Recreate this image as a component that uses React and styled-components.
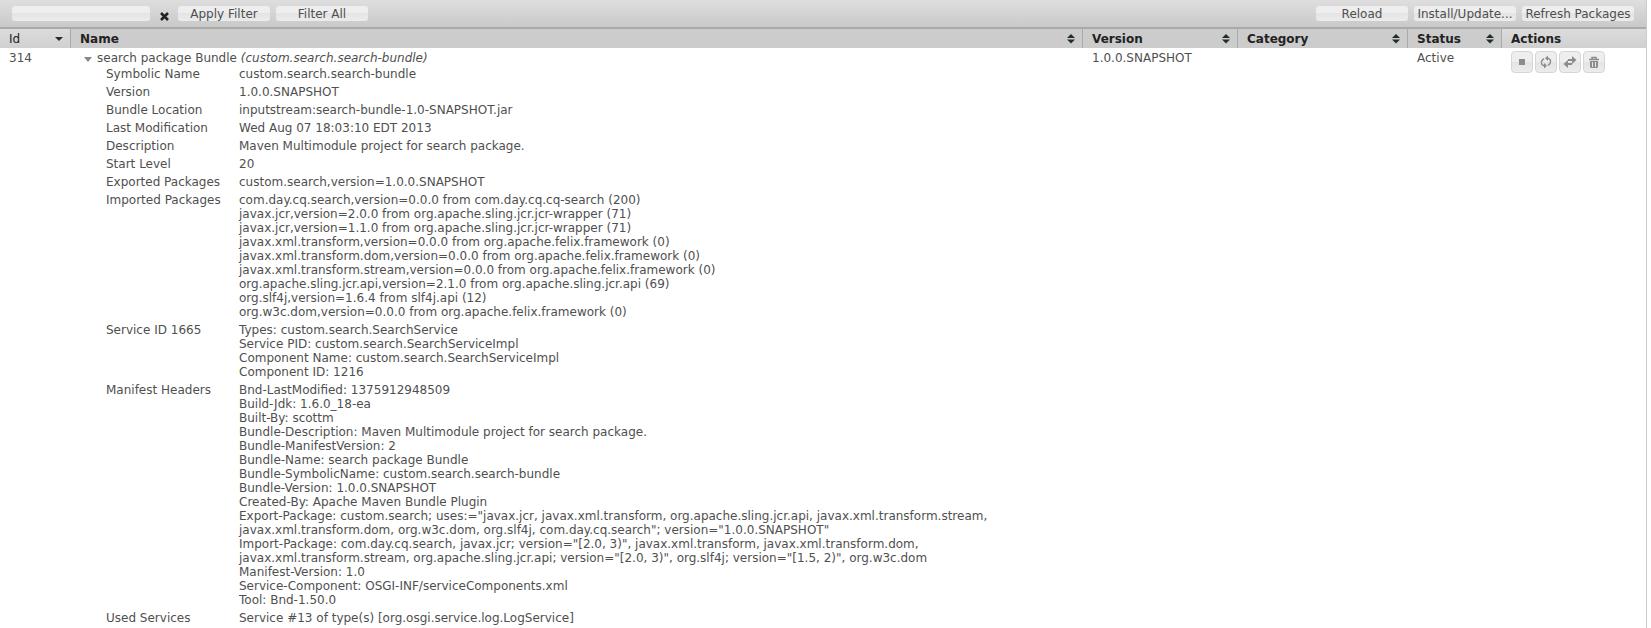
import React from 'react';
import styled, { createGlobalStyle, css } from 'styled-components';

const GlobalStyle = createGlobalStyle`
  body {
    margin: 0;
    background: #fff;
    color: #4f4f4f;
    font: 12px/14px "DejaVu Sans", Verdana, sans-serif;
  }

  button, input {
    font: inherit;
    color: inherit;
  }
`;

const Page = styled.main`
  min-height: 100vh;
  margin-right: 4px;
  box-sizing: border-box;
  border-right: 1px solid #ccc;
`;

const Toolbar = styled.form`
  display: flex;
  align-items: flex-start;
  gap: 6px;
  height: 27px;
  padding: 6px 12px 0;
  box-sizing: border-box;
  background: linear-gradient(#dedede, #c9c9c9);
`;

const glossy = css`
  border: 0;
  border-radius: 3px;
  background: linear-gradient(#eee 50%, #e4e4e4 50%, #ececec);
`;

const FilterInput = styled.input`
  ${glossy}
  width: 138px;
  height: 15px;
  padding: 0 4px;
  box-sizing: border-box;
`;

const ClearButton = styled.button`
  display: flex;
  width: 16px;
  padding: 6px 0 0 4px;
  border: 0;
  background: none;
`;

const Button = styled.button`
  ${glossy}
  width: ${({ $width }) => $width || '92px'};
  height: 15px;
  padding: 1px 0 0;
  line-height: 14px;
  white-space: nowrap;
`;

const Spacer = styled.div`
  flex: 1;
`;

const BundleTable = styled.table`
  width: 100%;
  table-layout: fixed;
  border-spacing: 0;
  border-top: 2px solid #aaa;
`;

const Th = styled.th`
  width: ${({ $width }) => $width || 'auto'};
  box-sizing: border-box;
  padding: 3px 7px 2px 9px;
  border-right: ${({ $last }) => ($last ? '0' : '1px solid #aaa')};
  background: ${({ $light }) => ($light ? 'linear-gradient(#dcdcdc, #d0d0d0)' : '#ccc')};
  color: #222;
  font-weight: ${({ $active }) => ($active ? 'normal' : 'bold')};
  text-align: left;
`;

const HeadLabel = styled.div`
  display: flex;
  align-items: center;
  justify-content: space-between;
`;

const Td = styled.td`
  padding: 3px 9px 0;
  vertical-align: top;
`;

const NameCell = styled(Td)`
  padding: 3px 9px 0 13px;
`;

const NameLine = styled.div`
  display: flex;
  align-items: center;
`;

const Toggle = styled.button`
  display: flex;
  width: 13px;
  padding: 2px 0 0;
  border: 0;
  background: none;
`;

const Details = styled.table`
  margin-left: 22px;
  border-spacing: 0;

  th, td {
    padding: 2px 0;
    font-weight: normal;
    text-align: left;
    vertical-align: top;
  }

  th {
    width: 133px;
    min-width: 133px;
  }
`;

const Actions = styled.div`
  display: flex;
  gap: 2px;
`;

const IconButton = styled.button`
  ${glossy}
  display: flex;
  align-items: center;
  justify-content: center;
  width: 22px;
  height: 22px;
  padding: 0;
  border: 1px solid #d6d6d6;
  border-radius: 4px;
  color: #8c8c8c;
`;

const columns = [
  { label: 'Id', width: '71px', sort: 'down', light: true },
  { label: 'Name', sort: 'both' },
  { label: 'Version', width: '155px', sort: 'both' },
  { label: 'Category', width: '170px', sort: 'both' },
  { label: 'Status', width: '94px', sort: 'both' },
  { label: 'Actions', width: '144px', light: true },
];

const details = [
  ['Symbolic Name', ['custom.search.search-bundle']],
  ['Version', ['1.0.0.SNAPSHOT']],
  ['Bundle Location', ['inputstream:search-bundle-1.0-SNAPSHOT.jar']],
  ['Last Modification', ['Wed Aug 07 18:03:10 EDT 2013']],
  ['Description', ['Maven Multimodule project for search package.']],
  ['Start Level', ['20']],
  ['Exported Packages', ['custom.search,version=1.0.0.SNAPSHOT']],
  ['Imported Packages', [
    'com.day.cq.search,version=0.0.0 from com.day.cq.cq-search (200)',
    'javax.jcr,version=2.0.0 from org.apache.sling.jcr.jcr-wrapper (71)',
    'javax.jcr,version=1.1.0 from org.apache.sling.jcr.jcr-wrapper (71)',
    'javax.xml.transform,version=0.0.0 from org.apache.felix.framework (0)',
    'javax.xml.transform.dom,version=0.0.0 from org.apache.felix.framework (0)',
    'javax.xml.transform.stream,version=0.0.0 from org.apache.felix.framework (0)',
    'org.apache.sling.jcr.api,version=2.1.0 from org.apache.sling.jcr.api (69)',
    'org.slf4j,version=1.6.4 from slf4j.api (12)',
    'org.w3c.dom,version=0.0.0 from org.apache.felix.framework (0)',
  ]],
  ['Service ID 1665', [
    'Types: custom.search.SearchService',
    'Service PID: custom.search.SearchServiceImpl',
    'Component Name: custom.search.SearchServiceImpl',
    'Component ID: 1216',
  ]],
  ['Manifest Headers', [
    'Bnd-LastModified: 1375912948509',
    'Build-Jdk: 1.6.0_18-ea',
    'Built-By: scottm',
    'Bundle-Description: Maven Multimodule project for search package.',
    'Bundle-ManifestVersion: 2',
    'Bundle-Name: search package Bundle',
    'Bundle-SymbolicName: custom.search.search-bundle',
    'Bundle-Version: 1.0.0.SNAPSHOT',
    'Created-By: Apache Maven Bundle Plugin',
    'Export-Package: custom.search; uses:="javax.jcr, javax.xml.transform, org.apache.sling.jcr.api, javax.xml.transform.stream, javax.xml.transform.dom, org.w3c.dom, org.slf4j, com.day.cq.search"; version="1.0.0.SNAPSHOT"',
    'Import-Package: com.day.cq.search, javax.jcr; version="[2.0, 3)", javax.xml.transform, javax.xml.transform.dom, javax.xml.transform.stream, org.apache.sling.jcr.api; version="[2.0, 3)", org.slf4j; version="[1.5, 2)", org.w3c.dom',
    'Manifest-Version: 1.0',
    'Service-Component: OSGI-INF/serviceComponents.xml',
    'Tool: Bnd-1.50.0',
  ]],
  ['Used Services', ['Service #13 of type(s) [org.osgi.service.log.LogService]']],
];

const SortIcon = ({ type }) => (
  <svg width="8" height="10" viewBox="0 0 8 10" fill="#222c2e" aria-hidden="true">
    {type === 'both' ? <path d="M4 0L8 4H0zM0 5.500H8L4 9.500z" /> : <path d="M0 3H8L4 7z" />}
  </svg>
);

const StopIcon = () => (
  <svg width="16" height="16" viewBox="0 0 16 16" aria-hidden="true">
    <path d="M5 5h6v6H5z" fill="currentColor" />
  </svg>
);

const RefreshIcon = () => (
  <svg width="16" height="16" viewBox="0 0 16 16" fill="none" stroke="currentColor" strokeWidth="1.500" aria-hidden="true">
    <path d="M6 4.500L4 6.500Q2.500 8.500 4 10.500L5.500 11.500H7.500" />
    <path d="M10 11.500L12 9.500Q13.500 7.500 12 5.500L10.500 4.500H8.500" />
    <path d="M10 1.500V7L7 4.300zM6 9V14.500L9 11.700z" fill="currentColor" stroke="none" />
  </svg>
);

const TransferIcon = () => (
  <svg width="16" height="16" viewBox="0 0 16 16" fill="currentColor" aria-hidden="true">
    <path d="M6 5h4V2L14.500 6 10 10V7H6z" />
    <path d="M10 9H6V6L1.500 10 6 14V11h4z" />
  </svg>
);

const TrashIcon = () => (
  <svg width="16" height="16" viewBox="0 0 16 16" aria-hidden="true">
    <path d="M3 5.500h10M6 5V3.500h4V5" fill="none" stroke="currentColor" strokeWidth="1.500" />
    <path d="M4 7h8v5.500q0 1.500-1.500 1.500h-5Q4 14 4 12.500z" fill="currentColor" />
    <path d="M6.500 8v5M9.500 8v5" stroke="#e8e8e8" />
  </svg>
);

const App = () => (
  <>
    <GlobalStyle />
    <Page>
      <Toolbar onSubmit={e => e.preventDefault()}>
        <FilterInput type="text" aria-label="Filter" />
        <ClearButton type="button" aria-label="Clear filter">
          <svg width="9" height="9" viewBox="0 0 9 9" stroke="#222" strokeWidth="2.600" aria-hidden="true">
            <path d="M1 1L8 8M8 1L1 8" />
          </svg>
        </ClearButton>
        <Button type="submit">Apply Filter</Button>
        <Button type="button">Filter All</Button>
        <Spacer />
        <Button type="button">Reload</Button>
        <Button type="button" $width="102px">Install/Update...</Button>
        <Button type="button" $width="112px">Refresh Packages</Button>
      </Toolbar>
      <BundleTable>
        <thead>
          <tr>
            {columns.map(({ label, width, sort, light }) => (
              <Th
                key={label}
                scope="col"
                $width={width}
                $light={light}
                $active={sort === 'down'}
                $last={!sort}
              >
                <HeadLabel>
                  {label}
                  {sort && <SortIcon type={sort} />}
                </HeadLabel>
              </Th>
            ))}
          </tr>
        </thead>
        <tbody>
          <tr>
            <Td>314</Td>
            <NameCell>
              <NameLine>
                <Toggle type="button" aria-label="Hide details">
                  <svg width="8" height="5" viewBox="0 0 8 5" fill="#888" aria-hidden="true">
                    <path d="M0 0H8L4 5z" />
                  </svg>
                </Toggle>
                <span>search package Bundle <em>(custom.search.search-bundle)</em></span>
              </NameLine>
              <Details>
                <tbody>
                  {details.map(([name, lines]) => (
                    <tr key={name}>
                      <th scope="row">{name}</th>
                      <td>{lines.map(line => <div key={line}>{line}</div>)}</td>
                    </tr>
                  ))}
                </tbody>
              </Details>
            </NameCell>
            <Td>1.0.0.SNAPSHOT</Td>
            <Td />
            <Td>Active</Td>
            <Td>
              <Actions>
                <IconButton type="button" aria-label="Stop"><StopIcon /></IconButton>
                <IconButton type="button" aria-label="Refresh"><RefreshIcon /></IconButton>
                <IconButton type="button" aria-label="Update"><TransferIcon /></IconButton>
                <IconButton type="button" aria-label="Uninstall"><TrashIcon /></IconButton>
              </Actions>
            </Td>
          </tr>
        </tbody>
      </BundleTable>
    </Page>
  </>
);

export default App;
